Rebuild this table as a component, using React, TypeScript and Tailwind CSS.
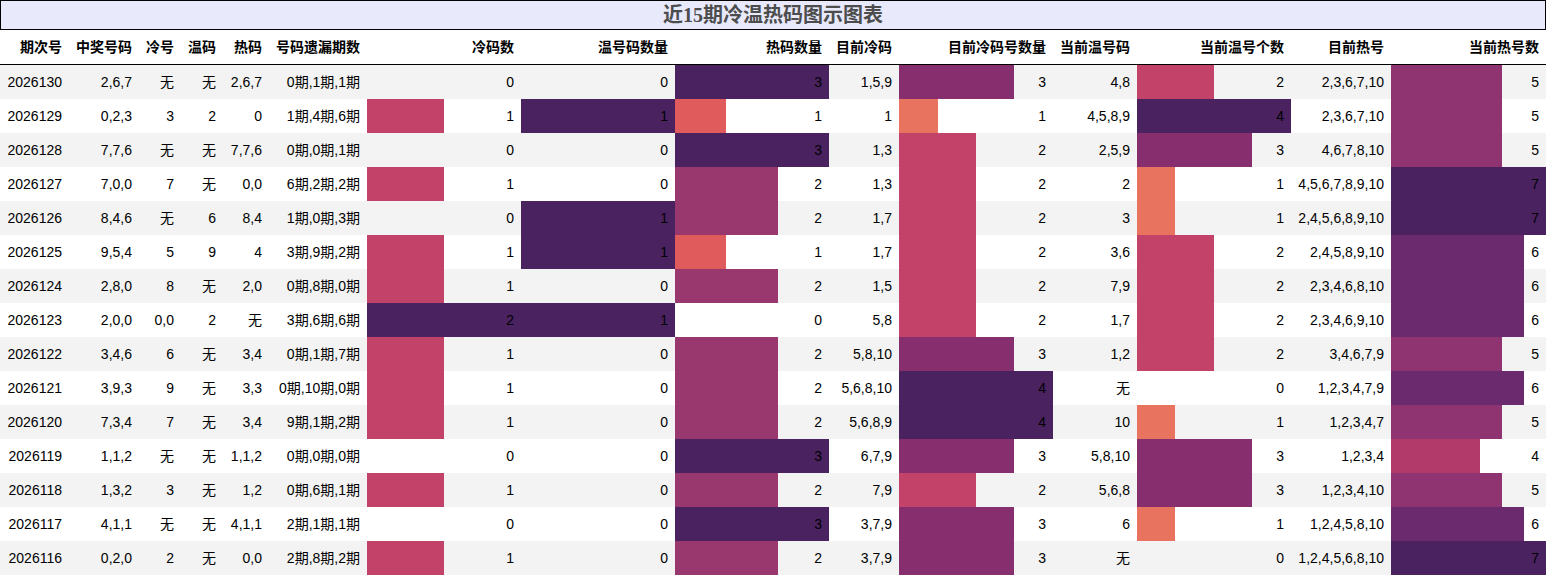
import React from "react";

type Row = [string, string, string, string, string, string, number, number, number, string, number, string, number, string, number];

const rows: Row[] = [
  ["2026130", "2,6,7", "无", "无", "2,6,7", "0期,1期,1期", 0, 0, 3, "1,5,9", 3, "4,8", 2, "2,3,6,7,10", 5],
  ["2026129", "0,2,3", "3", "2", "0", "1期,4期,6期", 1, 1, 1, "1", 1, "4,5,8,9", 4, "2,3,6,7,10", 5],
  ["2026128", "7,7,6", "无", "无", "7,7,6", "0期,0期,1期", 0, 0, 3, "1,3", 2, "2,5,9", 3, "4,6,7,8,10", 5],
  ["2026127", "7,0,0", "7", "无", "0,0", "6期,2期,2期", 1, 0, 2, "1,3", 2, "2", 1, "4,5,6,7,8,9,10", 7],
  ["2026126", "8,4,6", "无", "6", "8,4", "1期,0期,3期", 0, 1, 2, "1,7", 2, "3", 1, "2,4,5,6,8,9,10", 7],
  ["2026125", "9,5,4", "5", "9", "4", "3期,9期,2期", 1, 1, 1, "1,7", 2, "3,6", 2, "2,4,5,8,9,10", 6],
  ["2026124", "2,8,0", "8", "无", "2,0", "0期,8期,0期", 1, 0, 2, "1,5", 2, "7,9", 2, "2,3,4,6,8,10", 6],
  ["2026123", "2,0,0", "0,0", "2", "无", "3期,6期,6期", 2, 1, 0, "5,8", 2, "1,7", 2, "2,3,4,6,9,10", 6],
  ["2026122", "3,4,6", "6", "无", "3,4", "0期,1期,7期", 1, 0, 2, "5,8,10", 3, "1,2", 2, "3,4,6,7,9", 5],
  ["2026121", "3,9,3", "9", "无", "3,3", "0期,10期,0期", 1, 0, 2, "5,6,8,10", 4, "无", 0, "1,2,3,4,7,9", 6],
  ["2026120", "7,3,4", "7", "无", "3,4", "9期,1期,2期", 1, 0, 2, "5,6,8,9", 4, "10", 1, "1,2,3,4,7", 5],
  ["2026119", "1,1,2", "无", "无", "1,1,2", "0期,0期,0期", 0, 0, 3, "6,7,9", 3, "5,8,10", 3, "1,2,3,4", 4],
  ["2026118", "1,3,2", "3", "无", "1,2", "0期,6期,1期", 1, 0, 2, "7,9", 2, "5,6,8", 3, "1,2,3,4,10", 5],
  ["2026117", "4,1,1", "无", "无", "4,1,1", "2期,1期,1期", 0, 0, 3, "3,7,9", 3, "6", 1, "1,2,4,5,8,10", 6],
  ["2026116", "0,2,0", "2", "无", "0,0", "2期,8期,2期", 1, 0, 2, "3,7,9", 3, "无", 0, "1,2,4,5,6,8,10", 7],
];

const headers = [
  "期次号", "中奖号码", "冷号", "温码", "热码", "号码遗漏期数", "冷码数", "温号码数量", "热码数量",
  "目前冷码", "目前冷码号数量", "当前温号码", "当前温号个数", "目前热号", "当前热号数",
];

const colClasses = [
  "w-[69px]", "w-[70px]", "w-[42px]", "w-[42px]", "w-[46px]", "w-[98px]",
  "w-[154px]", "w-[154px]", "w-[154px]", "w-[70px]", "w-[154px]", "w-[84px]",
  "w-[154px]", "w-[100px]", "w-[155px]",
];

const barMax: Record<number, number> = { 6: 2, 7: 1, 8: 3, 10: 4, 12: 4, 14: 7 };

function colorFor(f: number): string {
  const stops: [number, string][] = [
    [0.25, "#e8735f"],
    [0.34, "#e05c5c"],
    [0.5, "#c2426a"],
    [0.58, "#b23a6a"],
    [0.67, "#98386e"],
    [0.72, "#8f3470"],
    [0.75, "#872f6e"],
    [0.86, "#6c2a6e"],
    [1, "#4b2260"],
  ];
  for (const [t, c] of stops) if (f <= t + 0.001) return c;
  return "#4b2260";
}

export default function App() {
  return (
    <div className="w-[1546px] bg-white text-black font-['Liberation_Sans','Noto_Sans_CJK_SC',sans-serif]">
      <div className="flex h-[30px] items-center justify-center border border-black bg-[#e8eafc]">
        <span className="text-[20px] font-bold leading-[28px] text-[#4d4d4d] font-['Liberation_Serif','Noto_Sans_CJK_SC',serif]">
          近15期冷温热码图示图表
        </span>
      </div>
      <table className="w-[1546px] table-fixed border-collapse text-[14px] leading-[20px]">
        <colgroup>
          {colClasses.map((c, i) => (
            <col key={i} className={c} />
          ))}
        </colgroup>
        <thead>
          <tr className="border-b border-black">
            {headers.map((h) => (
              <th key={h} className="whitespace-nowrap px-[7px] py-[7px] text-right font-bold">
                {h}
              </th>
            ))}
          </tr>
        </thead>
        <tbody>
          {rows.map((r, ri) => (
            <tr key={r[0]} className={ri % 2 === 0 ? "bg-[#f3f3f3]" : "bg-white"}>
              {r.map((v, ci) => {
                const max = barMax[ci];
                let style: React.CSSProperties | undefined;
                if (max !== undefined && typeof v === "number" && v > 0) {
                  const f = v / max;
                  const pct = (f * 100).toFixed(2);
                  const c = colorFor(f);
                  style = { background: `linear-gradient(90deg, ${c} ${pct}%, transparent ${pct}%)` };
                }
                return (
                  <td key={ci} className="whitespace-nowrap px-[7px] py-[7px] text-right" style={style}>
                    {v}
                  </td>
                );
              })}
            </tr>
          ))}
        </tbody>
      </table>
    </div>
  );
}
